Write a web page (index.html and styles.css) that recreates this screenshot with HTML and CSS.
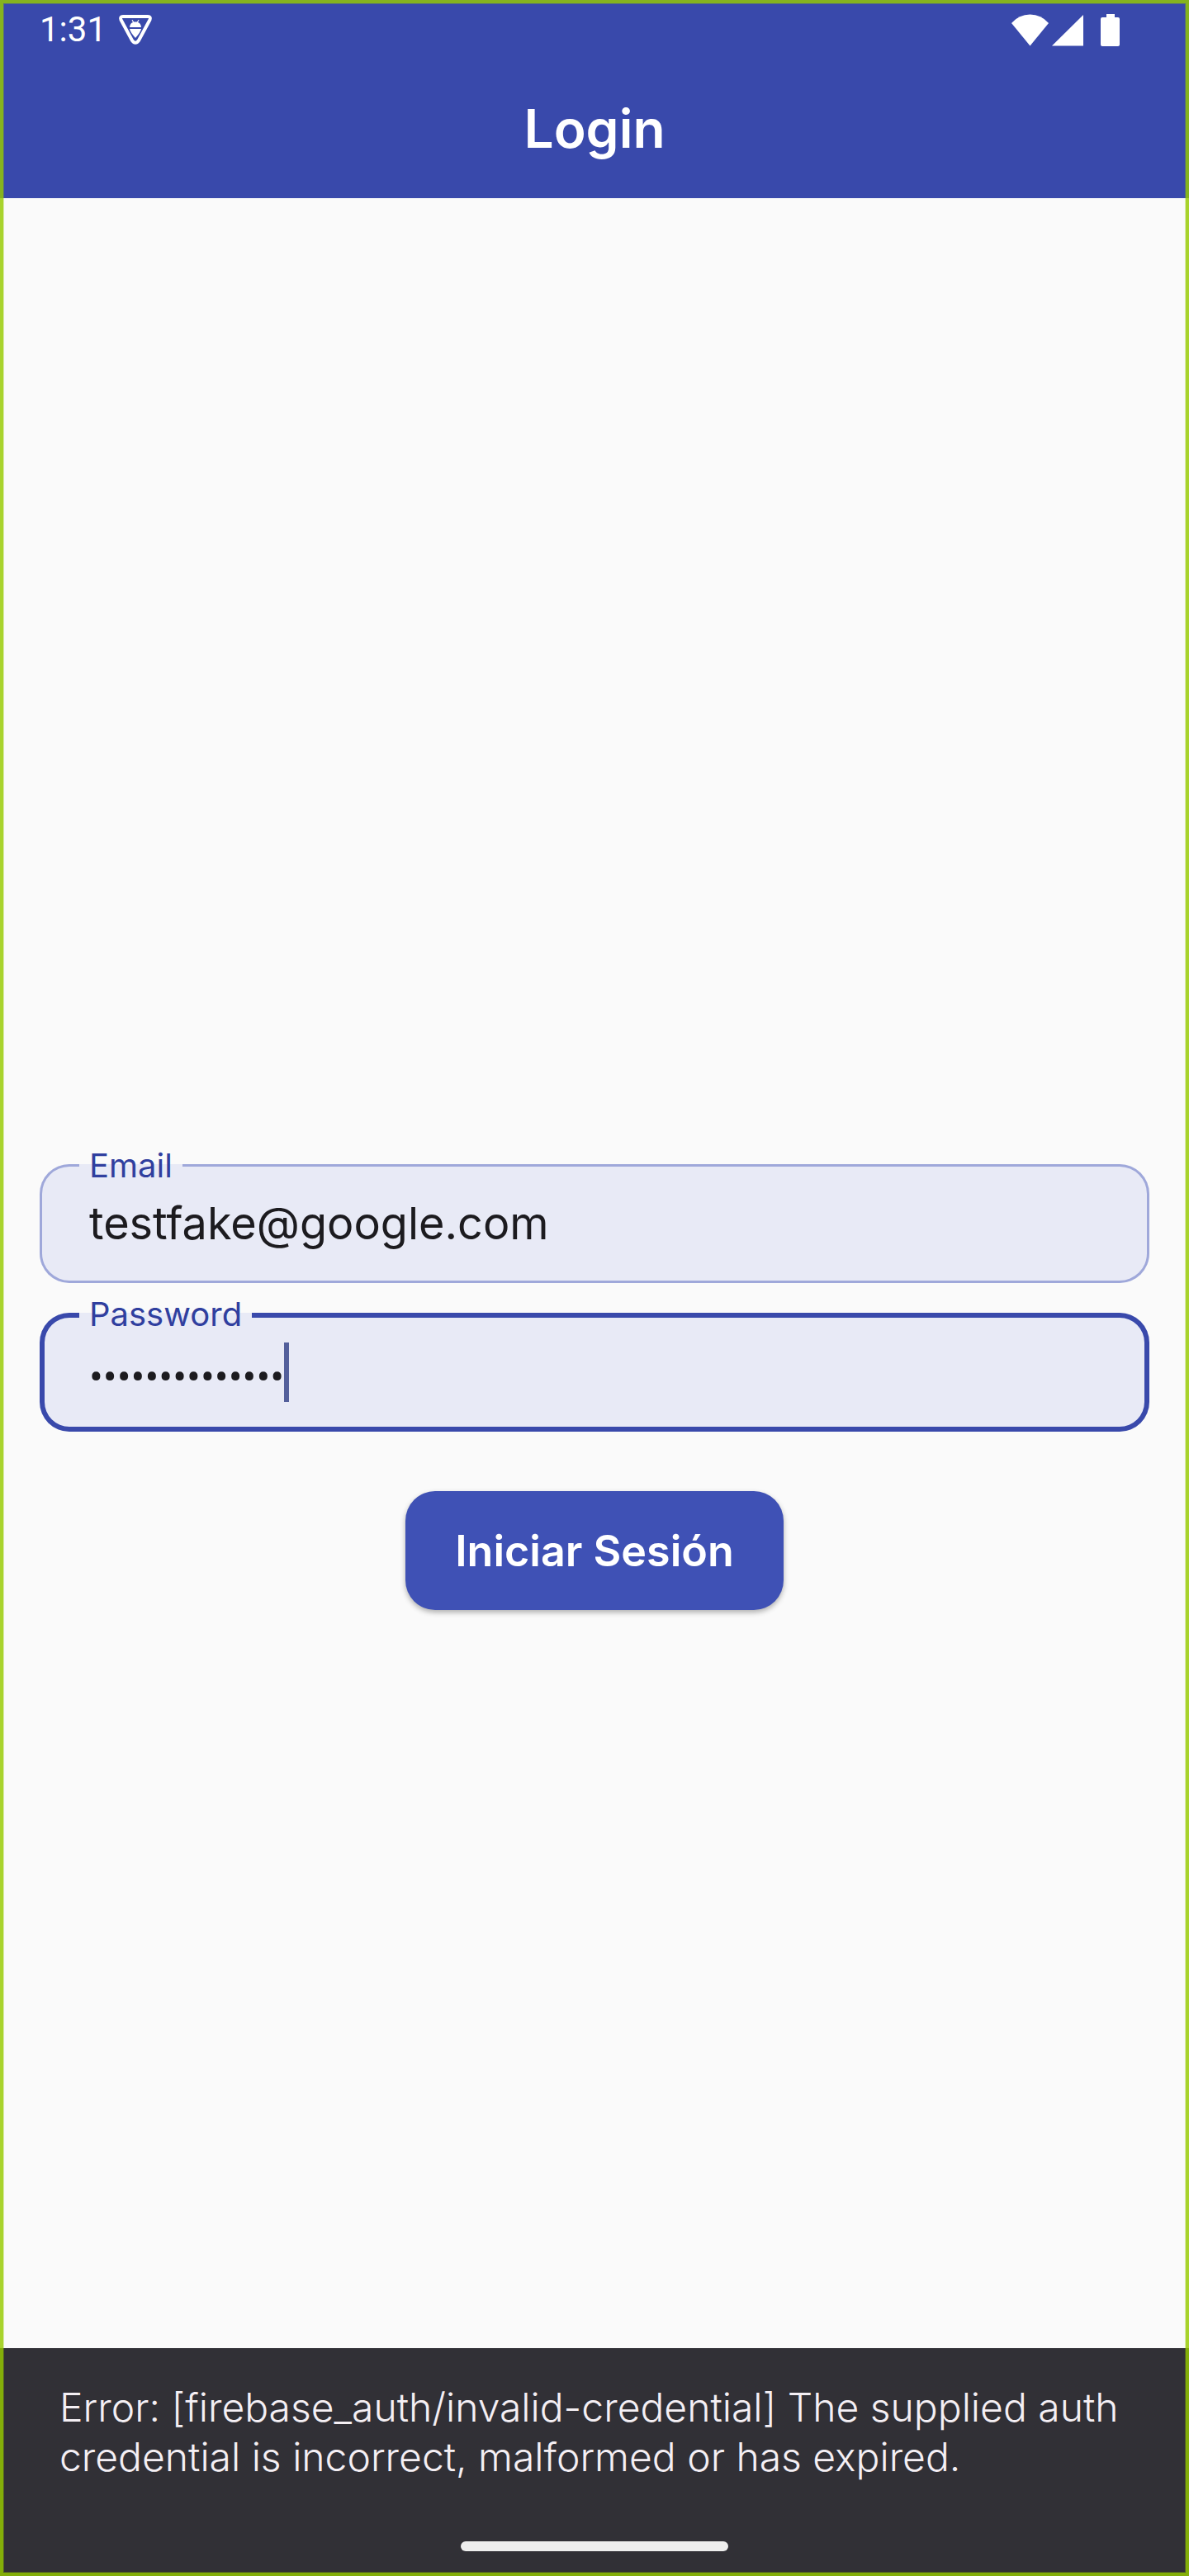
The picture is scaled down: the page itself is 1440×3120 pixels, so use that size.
FILE: index.html
```
<!DOCTYPE html>
<html lang="es">
<head>
<meta charset="utf-8">
<meta name="viewport" content="width=device-width, initial-scale=1">
<title>Login</title>
<link rel="stylesheet" href="styles.css">
</head>
<body>
<div class="screen">
  <header class="header">
    <div class="status-bar">
      <time class="clock">1:31</time>
      <svg class="status-debug" width="42" height="38" viewBox="0 0 42 38" fill="#fff" aria-hidden="true">
        <path d="M6 3H36Q40 3 38.500 7L25 32Q21 37.500 17 32L3.500 7Q2 3 6 3Z" fill="none" stroke="#fff" stroke-width="4" stroke-linejoin="round"/>
        <path d="M14 16Q14.500 11 18 10L16.500 7.500L17.500 7L19 9.500H23L24.500 7L25.500 7.500L24 10Q27.500 11 28 16Z"/>
        <path d="M14 18H28Q27.500 21.500 21 29Q14.500 21.500 14 18Z"/>
      </svg>
      <div class="status-icons">
        <svg width="45" height="39" viewBox="0 0 45 39" fill="#fff" aria-hidden="true">
          <path d="M0 11Q9 0.500 22.500 0.500T45 11L22.500 38.500Z"/>
        </svg>
        <svg class="signal" width="38" height="39" viewBox="0 0 38 39" fill="#fff" aria-hidden="true">
          <path d="M0 38.500L38 1V38.500Z"/>
        </svg>
        <svg class="battery" width="23" height="39" viewBox="0 0 23 39" fill="#fff" aria-hidden="true">
          <path d="M7 0H17V4H21Q23 4 23 6V37Q23 39 21 39H2Q0 39 0 37V6Q0 4 2 4H7Z"/>
        </svg>
      </div>
    </div>
    <h1 class="title">Login</h1>
  </header>

  <main class="content">
    <form class="login-form">
      <div class="field">
        <label class="field-label" for="email">Email</label>
        <input class="field-input" id="email" type="email" value="testfake@google.com">
      </div>
      <div class="field field-focused">
        <label class="field-label" for="password">Password</label>
        <input class="field-input field-password" id="password" type="password" value="fakepassword12">
        <span class="caret"></span>
      </div>
      <button class="submit" type="button">Iniciar Sesión</button>
    </form>
  </main>

  <div class="snackbar" role="alert">
    <p class="snackbar-text">Error: [firebase_auth/invalid-credential] The supplied auth credential is incorrect, malformed or has expired.</p>
    <div class="home-bar"></div>
  </div>
</div>
</body>
</html>
```
FILE: styles.css
```
:root {
  --primary: #3949ab;
  --fill: #e8eaf6;
}

* {
  box-sizing: border-box;
}

body {
  margin: 0;
  background: #fafafa;
  font-family: Inter, "Open Sans", sans-serif;
}

.screen {
  display: flex;
  flex-direction: column;
  min-height: 100vh;
}

/* Green frame around the whole screen */
.screen::after {
  content: "";
  position: fixed;
  inset: 0;
  border: 4px solid rgba(150, 202, 0, 0.82);
  box-shadow: inset 0 0 0 1px rgba(150, 202, 0, 0.3);
  pointer-events: none;
}

.header {
  background: var(--primary);
  color: #fff;
}

.status-bar {
  display: flex;
  align-items: center;
  height: 72px;
  padding: 0 84px 0 48px;
}

.clock {
  font: 400 42px/48px Roboto, sans-serif;
}

.status-debug {
  margin-left: 14px;
}

.status-icons {
  display: flex;
  margin-left: auto;
}

.signal {
  margin-left: 4px;
}

.battery {
  margin-left: 21px;
}

.title {
  margin: 0;
  font-size: 64px;
  font-weight: 600;
  line-height: 168px;
  text-align: center;
}

.content {
  display: flex;
  flex: 1;
  flex-direction: column;
  justify-content: center;
  padding: 0 48px;
}

.login-form {
  display: flex;
  flex-direction: column;
  gap: 36px;
}

.field {
  position: relative;
  display: flex;
  align-items: center;
  height: 144px;
  padding: 0 60px;
  border-radius: 36px;
  background: var(--fill);
  box-shadow: inset 0 0 0 3px #9fa8da;
}

.field-focused {
  box-shadow: inset 0 0 0 6px var(--primary);
}

/* Sits on the outline and interrupts it */
.field-label {
  position: absolute;
  top: -24px;
  left: 48px;
  padding: 0 12px;
  background: linear-gradient(transparent 24px, var(--fill) 24px);
  color: #303f9f;
  font-size: 40px;
  line-height: 52px;
}

.field-input {
  flex: 1;
  min-width: 0;
  padding: 0;
  border: 0;
  outline: 0;
  background: none;
  color: #1c1b1f;
  font: inherit;
  font-size: 54px;
  line-height: 72px;
}

.field-password {
  flex: none;
  max-width: 100%;
  padding-top: 12px;
  font-family: Roboto, sans-serif;
  font-size: 50px;
  field-sizing: content;
}

.caret {
  width: 6px;
  height: 72px;
  background: #535f9b;
}

.submit {
  align-self: center;
  height: 144px;
  margin-top: 36px;
  padding: 0 60px;
  border: 0;
  border-radius: 36px;
  background: #3f51b5;
  box-shadow: 0 3px 6px rgba(0, 0, 0, 0.3);
  color: #fff;
  font: inherit;
  font-size: 52px;
  font-weight: 600;
}

.snackbar {
  position: fixed;
  right: 0;
  bottom: 0;
  left: 0;
  display: flex;
  flex-direction: column;
  align-items: center;
  gap: 72px;
  padding: 42px 72px 30px;
  background: #313036;
}

.snackbar-text {
  align-self: stretch;
  margin: 0;
  color: #f4eff4;
  font-size: 48px;
  font-weight: 300;
  line-height: 60px;
}

.home-bar {
  width: 324px;
  height: 12px;
  border-radius: 6px;
  background: #eee;
}
```
